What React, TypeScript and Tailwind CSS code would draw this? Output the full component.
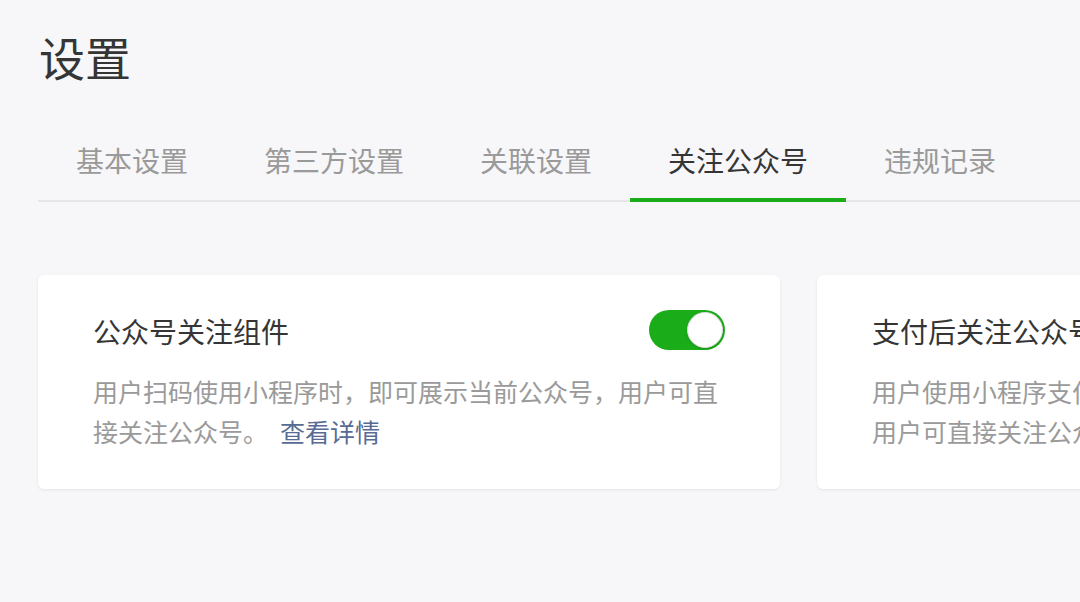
import { useState } from "react";

const tabs = ["基本设置", "第三方设置", "关联设置", "关注公众号", "违规记录"];

const cards = [
  {
    title: "公众号关注组件",
    desc: "用户扫码使用小程序时，即可展示当前公众号，用户可直接关注公众号。",
    on: true,
  },
  {
    title: "支付后关注公众号",
    desc: "用户使用小程序支付完成后，即可展示当前关联公众号，用户可直接关注公众号。",
    on: false,
  },
];

function Toggle({ on, onClick }: { on: boolean; onClick: () => void }) {
  return (
    <button
      onClick={onClick}
      className={`relative -mt-[2px] w-[76px] h-[40px] rounded-full shrink-0 transition ${
        on ? "bg-[#1aad19]" : "bg-[#e5e5e5]"
      }`}
    >
      <span
        className={`absolute top-[2px] w-[36px] h-[36px] rounded-full bg-white border border-[#dcdcdc] shadow-sm transition-all ${
          on ? "left-[38px]" : "left-[2px]"
        }`}
      />
    </button>
  );
}

export default function App() {
  const [active, setActive] = useState(3);
  const [toggles, setToggles] = useState(cards.map((c) => c.on));

  return (
    <div
      className="w-[1080px] h-[602px] overflow-hidden bg-[#f7f7f9] pl-[38px]"
      style={{ fontFamily: '"Noto Sans CJK SC", "Noto Sans", sans-serif' }}
    >
      {/* 标题 */}
      <h1 className="pt-[26px] pl-[1px] text-[46px] leading-[60px] text-[#353535]">设置</h1>

      {/* Tabs */}
      <div className="mt-[54px] flex border-b-2 border-[#e7e7eb] w-[1100px]">
        {tabs.map((t, i) => (
          <button
            key={t}
            onClick={() => setActive(i)}
            className={`px-[38px] pb-[18px] text-[28px] leading-[40px] -mb-[2px] border-b-[4px] ${
              i === active ? "text-[#353535] border-[#1aad19]" : "text-[#9a9a9a] border-transparent"
            }`}
          >
            {t}
          </button>
        ))}
      </div>

      {/* Cards */}
      <div className="mt-[73px] flex gap-[37px]">
        {cards.map((c, i) => (
          <div
            key={c.title}
            className="w-[742px] h-[214px] shrink-0 bg-white rounded-[6px] shadow-[0_1px_3px_rgba(0,0,0,0.08)] pl-[55px] pr-[51px] pt-[34px]"
          >
            <div className="flex items-center justify-between pr-[4px]">
              <h3 className="text-[28px] leading-[44px] text-[#353535]">{c.title}</h3>
              <Toggle
                on={toggles[i]}
                onClick={() => setToggles(toggles.map((v, j) => (j === i ? !v : v)))}
              />
            </div>
            <p className="mt-[18px] text-[25px] leading-[40px] text-[#9a9a9a]">
              {c.desc}
              <a className="ml-[12px] text-[#576b95] cursor-pointer">查看详情</a>
            </p>
          </div>
        ))}
      </div>
    </div>
  );
}
